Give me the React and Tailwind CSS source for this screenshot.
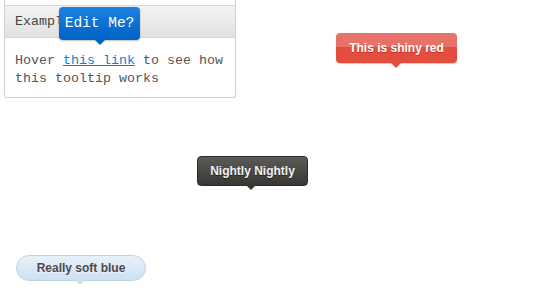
export default function App() {
  const mono = { fontFamily: '"Liberation Mono", "DejaVu Sans Mono", monospace' };
  const sans = { fontFamily: '"Liberation Sans", Arial, sans-serif' };
  return (
    <div className="relative w-[540px] h-[300px] bg-white overflow-hidden">
      <div className="ml-[4px] w-[232px] border-x border-b border-[#cfcfcf] rounded-b-[3px] bg-white" style={mono}>
        <div className="h-[5px]" />
        <div className="h-[33px] border-y border-[#d6d6d6] bg-gradient-to-b from-[#f3f3f4] to-[#e2e2e5] pl-[10px] flex items-center text-[13.33px] text-[#444]">
          Example
        </div>
        <div className="pl-[10px] pt-[14px] pb-[9px] text-[13.33px] leading-[18px] text-[#555]">
          Hover <span className="text-[#0a80cf] underline">this link</span> to see how
          <br />
          this tooltip works
        </div>
      </div>

      {/* Edit Me tooltip */}
      <div className="absolute left-[59px] top-[7px] w-[81px] h-[33px] rounded-[4px] bg-gradient-to-b from-[#1a82e2] to-[#0062c4] flex items-center justify-center text-white text-[14.5px] shadow-[0_1px_2px_rgba(0,0,0,0.25)]" style={mono}>
        Edit Me?
        <div className="absolute left-1/2 -translate-x-1/2 top-full w-0 h-0 border-x-[5px] border-x-transparent border-t-[5px] border-t-[#0062c4]" />
      </div>

      {/* Shiny red */}
      <div className="absolute left-[336px] top-[33px] w-[121px] h-[30px] rounded-[4px] overflow-visible shadow-[0_1px_1px_rgba(0,0,0,0.2)]" style={sans}>
        <div className="absolute inset-0 rounded-[4px] overflow-hidden flex flex-col">
          <div className="h-[14px] bg-[#e87267]" />
          <div className="flex-1 bg-[#e24d3d]" />
        </div>
        <div className="relative h-full flex items-center justify-center text-white font-bold text-[12px] [text-shadow:0_1px_0_rgba(120,0,0,0.35)]">
          This is shiny red
        </div>
        <div className="absolute left-[55px] top-full w-0 h-0 border-x-[5px] border-x-transparent border-t-[5px] border-t-[#e24d3d]" />
      </div>

      {/* Nightly */}
      <div className="absolute left-[197px] top-[156px] w-[111px] h-[30px] rounded-[4px] bg-gradient-to-b from-[#5c5b57] to-[#383733] border border-[#2e2d2a] flex items-center justify-center text-[#eef1f6] font-bold text-[12px] [text-shadow:0_1px_0_rgba(0,0,0,0.5)]" style={sans}>
        Nightly Nightly
        <div className="absolute left-[48px] top-full w-0 h-0 border-x-[5px] border-x-transparent border-t-[5px] border-t-[#383733]" />
      </div>

      {/* Soft blue */}
      <div className="absolute left-[16px] top-[255px] w-[130px] h-[26px] rounded-full bg-gradient-to-b from-[#e8f1fa] to-[#cde0f2] border border-[#bcd3e8] flex items-center justify-center text-[#4a4a4a] font-bold text-[12px] [text-shadow:0_1px_0_rgba(255,255,255,0.6)]" style={sans}>
        Really soft blue
        <div className="absolute left-[58px] top-full w-0 h-0 border-x-[5px] border-x-transparent border-t-[5px] border-t-[#cde0f2]" />
      </div>
    </div>
  );
}
